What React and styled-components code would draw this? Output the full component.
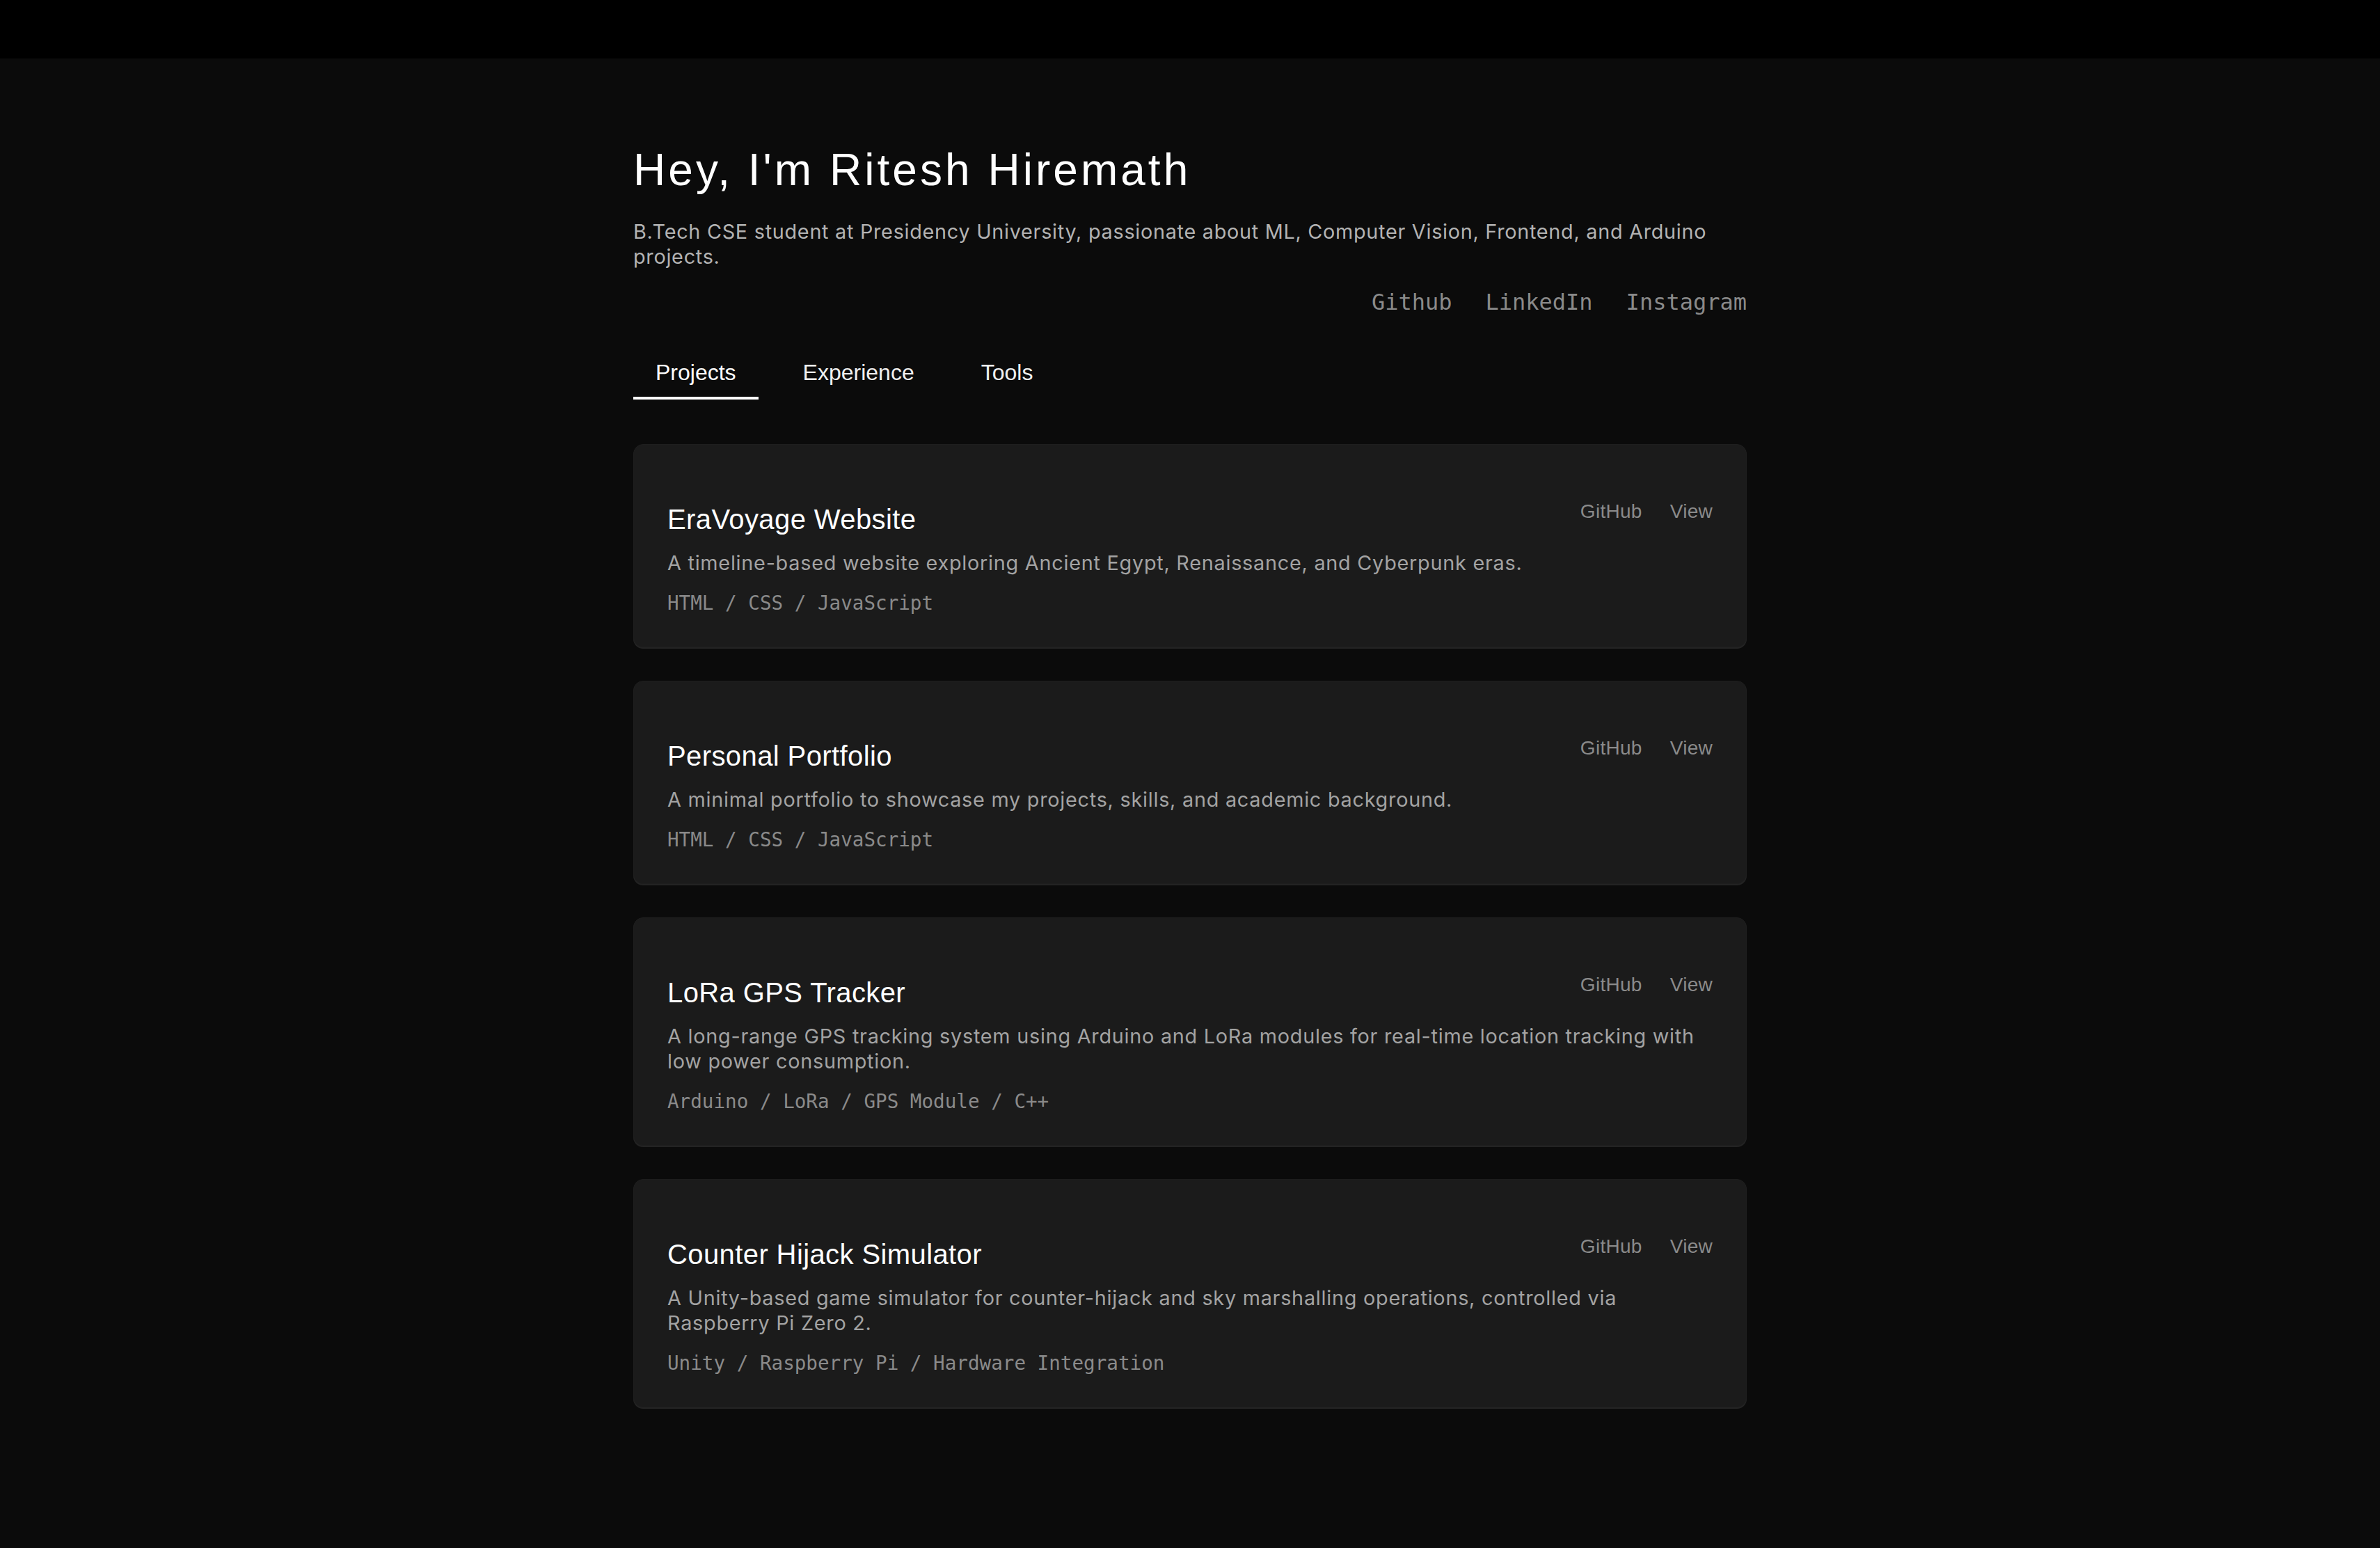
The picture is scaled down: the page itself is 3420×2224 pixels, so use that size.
import React, { useState } from 'react';
import styled, { createGlobalStyle } from 'styled-components';

const GlobalStyle = createGlobalStyle`
  html, body {
    margin: 0;
    padding: 0;
    background: #0b0b0b;
  }
  body {
    font-family: 'Liberation Sans', Helvetica, Arial, sans-serif;
    color: #fff;
  }
  * {
    box-sizing: border-box;
  }
`;

const Page = styled.div`
  min-height: 100vh;
  background: #0b0b0b;
`;

const TopBar = styled.nav`
  height: 84px;
  background: #000;
`;

const Main = styled.main`
  max-width: 1600px;
  margin: 0 auto;
  padding: 123px 0 120px;
`;

const Name = styled.h1`
  margin: 0;
  font-size: 64px;
  line-height: 74px;
  font-weight: 400;
  letter-spacing: 0.063em;
  color: #fff;
`;

const Bio = styled.p`
  margin: 34px 0 0;
  font-family: Inter, 'Liberation Sans', sans-serif;
  font-size: 28.8px;
  line-height: 36px;
  letter-spacing: 0.72px;
  color: #b3b3b3;
`;

const Socials = styled.div`
  display: flex;
  justify-content: flex-end;
  gap: 48px;
  margin-top: 28px;
`;

const SocialLink = styled.a`
  font-family: 'DejaVu Sans Mono', 'Liberation Mono', monospace;
  font-size: 32px;
  color: #8a8a8a;
  text-decoration: none;
`;

const Tabs = styled.div`
  display: flex;
  gap: 32px;
  margin-top: 48px;
`;

const Tab = styled.button`
  background: none;
  border: none;
  border-bottom: 4px solid ${p => (p.$active ? '#fff' : 'transparent')};
  padding: 16px 32px;
  font-family: inherit;
  font-size: 32px;
  line-height: normal;
  color: ${p => (p.$active ? '#fff' : '#f0f0f0')};
  cursor: pointer;
`;

const CardList = styled.div`
  display: flex;
  flex-direction: column;
  gap: 48px;
  margin-top: 64px;
`;

const Card = styled.article`
  background: #1b1b1b;
  border: 1px solid #1e1e1e;
  border-radius: 14px;
  box-shadow: 0 2px 0 #232323;
  padding: 85px 48px 46px;
`;

const CardHead = styled.div`
  display: flex;
  justify-content: space-between;
  align-items: flex-start;
`;

const Title = styled.h3`
  margin: 0;
  font-size: 40px;
  font-weight: 400;
  line-height: normal;
  letter-spacing: 0.01em;
  color: #fff;
`;

const CardLinks = styled.div`
  display: flex;
  gap: 40px;
  margin-top: -5px;
`;

const CardLink = styled.a`
  font-size: 28px;
  letter-spacing: 0.01em;
  color: #8a8a8a;
  text-decoration: none;
`;

const Desc = styled.p`
  margin: 22px 0 0;
  font-family: Inter, 'Liberation Sans', sans-serif;
  font-size: 28.8px;
  line-height: 36px;
  letter-spacing: 0.75px;
  color: #a3a3a3;
`;

const Stack = styled.div`
  margin-top: 23px;
  font-family: 'DejaVu Sans Mono', 'Liberation Mono', monospace;
  font-size: 27.6px;
  color: #8a8a8a;
`;

const projects = [
  {
    title: 'EraVoyage Website',
    desc: 'A timeline-based website exploring Ancient Egypt, Renaissance, and Cyberpunk eras.',
    stack: 'HTML / CSS / JavaScript',
  },
  {
    title: 'Personal Portfolio',
    desc: 'A minimal portfolio to showcase my projects, skills, and academic background.',
    stack: 'HTML / CSS / JavaScript',
  },
  {
    title: 'LoRa GPS Tracker',
    desc: 'A long-range GPS tracking system using Arduino and LoRa modules for real-time location tracking with low power consumption.',
    stack: 'Arduino / LoRa / GPS Module / C++',
  },
  {
    title: 'Counter Hijack Simulator',
    desc: 'A Unity-based game simulator for counter-hijack and sky marshalling operations, controlled via Raspberry Pi Zero 2.',
    stack: 'Unity / Raspberry Pi / Hardware Integration',
  },
];

const tabs = ['Projects', 'Experience', 'Tools'];

export default function App() {
  const [tab, setTab] = useState('Projects');

  return (
    <Page>
      <GlobalStyle />
      <TopBar />
      <Main>
        <Name>Hey, I'm Ritesh Hiremath</Name>
        <Bio>
          B.Tech CSE student at Presidency University, passionate about ML, Computer Vision, Frontend, and Arduino projects.
        </Bio>
        <Socials>
          <SocialLink href="#">Github</SocialLink>
          <SocialLink href="#">LinkedIn</SocialLink>
          <SocialLink href="#">Instagram</SocialLink>
        </Socials>
        <Tabs>
          {tabs.map(t => (
            <Tab key={t} $active={t === tab} onClick={() => setTab(t)}>{t}</Tab>
          ))}
        </Tabs>
        <CardList>
          {projects.map(p => (
            <Card key={p.title}>
              <CardHead>
                <Title>{p.title}</Title>
                <CardLinks>
                  <CardLink href="#">GitHub</CardLink>
                  <CardLink href="#">View</CardLink>
                </CardLinks>
              </CardHead>
              <Desc>{p.desc}</Desc>
              <Stack>{p.stack}</Stack>
            </Card>
          ))}
        </CardList>
      </Main>
    </Page>
  );
}
